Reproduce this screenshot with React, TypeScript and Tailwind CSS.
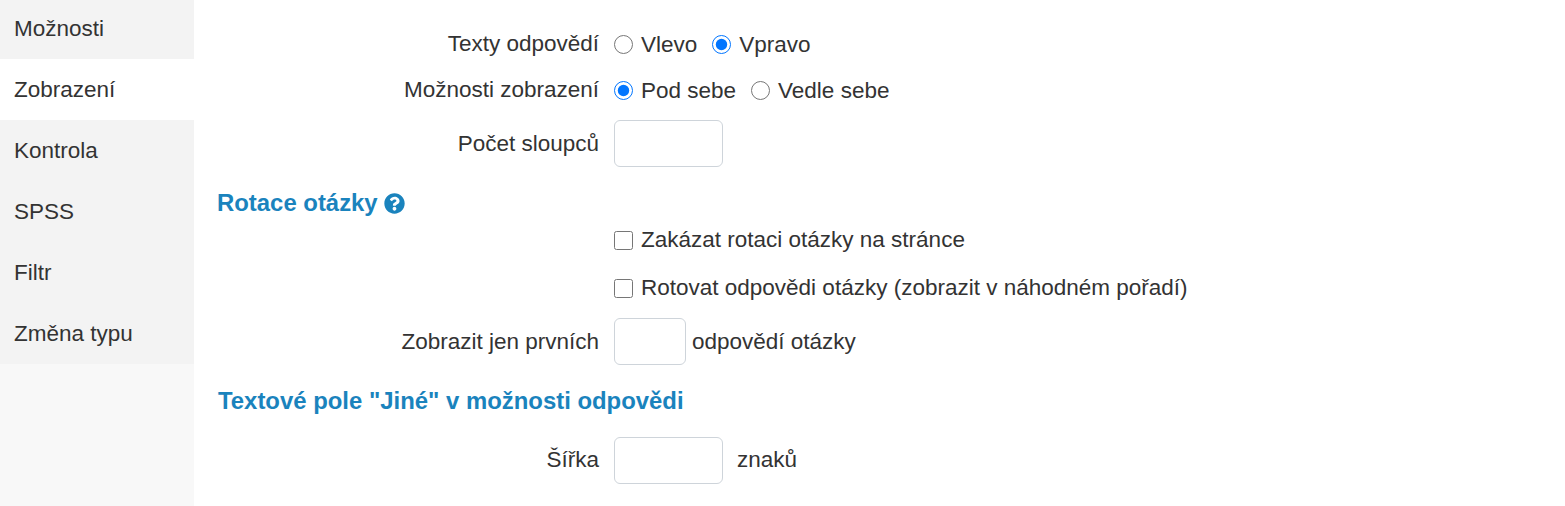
import { FaQuestionCircle } from 'react-icons/fa';

const tabs = ['Možnosti', 'Zobrazení', 'Kontrola', 'SPSS', 'Filtr', 'Změna typu'];

function Row({ label, className, children }: { label?: string; className: string; children: React.ReactNode }) {
    return (
        <div className={`flex items-center ${className}`}>
            <div className="w-[397px] shrink-0 pr-[15px] text-right">{label}</div>
            <div className="flex items-center">{children}</div>
        </div>
    );
}

function Choice({ type, name, label, checked, className = '' }: { type: string; name?: string; label: string; checked?: boolean; className?: string }) {
    return (
        <label className={`flex items-center ${className}`}>
            <input type={type} name={name} defaultChecked={checked} className="m-0 h-[19px] w-[19px]" />
            <span className={`ml-[8px] ${type === 'radio' ? 'mt-[2px]' : ''}`}>{label}</span>
        </label>
    );
}

function NumInput({ className }: { className: string }) {
    return <input type="text" className={`h-[47px] rounded-[6px] border border-[#ced4da] bg-white ${className}`} />;
}

export default function App() {
    return (
        <div className="flex h-[506px] w-[1565px] overflow-hidden bg-white font-['Liberation_Sans',Arial,sans-serif] text-[22.5px] text-[#333333]">
            <div className="w-[194px] shrink-0 bg-[#f8f8f8]">
                {tabs.map((tab, i) => (
                    <div
                        key={tab}
                        className={`flex items-center pl-[14px] ${i === 0 ? 'h-[59px] pb-[2px]' : 'h-[61px]'} ${tab === 'Zobrazení' ? 'bg-white' : 'bg-[#f3f3f3]'}`}
                    >
                        {tab}
                    </div>
                ))}
            </div>
            <div className="flex-1 pt-[21px] pl-[23px]">
                <Row label="Texty odpovědí" className="h-[46px]">
                    <Choice type="radio" name="a" label="Vlevo" />
                    <Choice type="radio" name="a" label="Vpravo" checked className="ml-[15px]" />
                </Row>
                <Row label="Možnosti zobrazení" className="h-[46px]">
                    <Choice type="radio" name="b" label="Pod sebe" checked />
                    <Choice type="radio" name="b" label="Vedle sebe" className="ml-[15px]" />
                </Row>
                <Row label="Počet sloupců" className="mt-[7px] h-[47px]">
                    <NumInput className="w-[109px]" />
                </Row>
                <h3 className="mt-[23px] flex h-[26px] items-center text-[23.9px] font-bold text-[#1a83bd]">
                    Rotace otázky
                    <FaQuestionCircle className="ml-[6px] text-[21px]" />
                </h3>
                <Row className="mt-[11px] h-[26px]">
                    <Choice type="checkbox" label="Zakázat rotaci otázky na stránce" />
                </Row>
                <Row className="mt-[22px] h-[26px]">
                    <Choice type="checkbox" label="Rotovat odpovědi otázky (zobrazit v náhodném pořadí)" />
                </Row>
                <Row label="Zobrazit jen prvních" className="mt-[17px] h-[47px]">
                    <NumInput className="w-[72px]" />
                    <span className="ml-[6px]">odpovědí otázky</span>
                </Row>
                <h3 className="mt-[23px] ml-[1px] h-[26px] text-[23.9px] font-bold leading-[26px] text-[#1a83bd]">
                    Textové pole "Jiné" v možnosti odpovědi
                </h3>
                <Row label="Šířka" className="mt-[23px] h-[47px] [&>div:first-child]:pb-[2px]">
                    <NumInput className="w-[109px]" />
                    <span className="mb-[2px] ml-[14px]">znaků</span>
                </Row>
            </div>
        </div>
    );
}
